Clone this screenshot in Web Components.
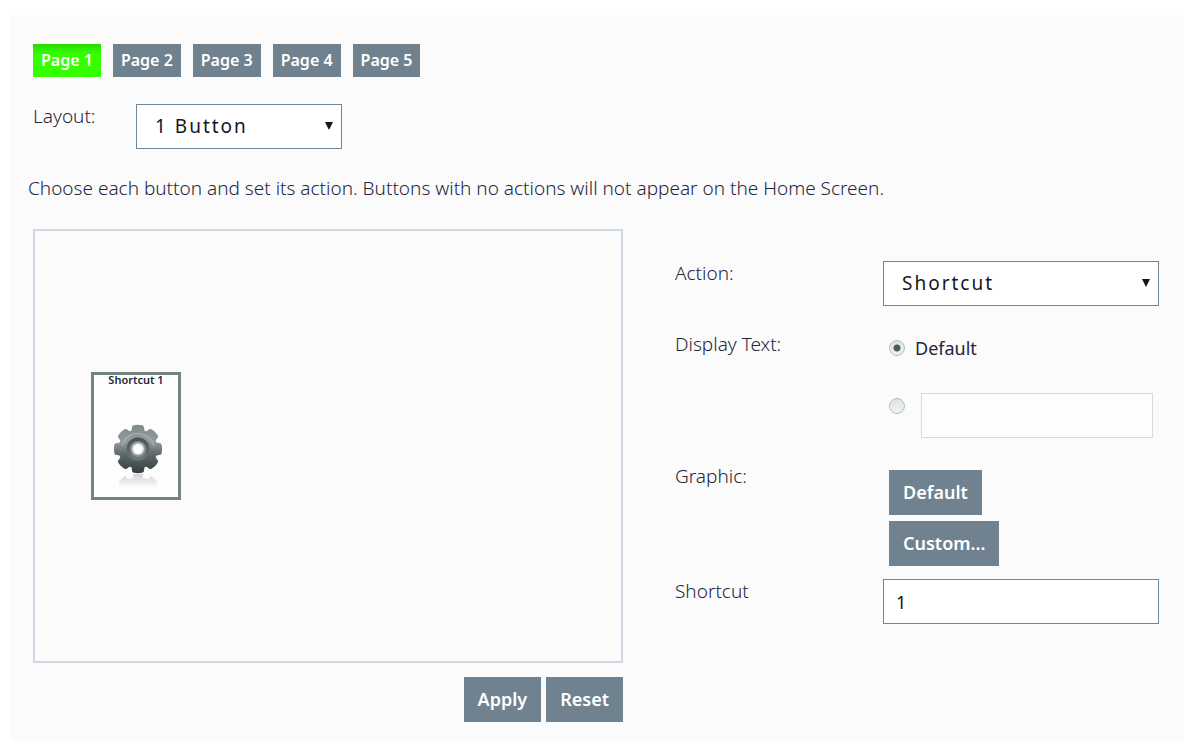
<!DOCTYPE html>
<html lang="en">
<head>
<meta charset="utf-8">
<title>Home Screen Layout</title>
<style>
  body {
    margin: 0;
    background: #fff;
    color: #24263c;
    font: 18px/24px "Noto Sans", "Open Sans", sans-serif;
  }
</style>
</head>
<body>
<home-screen-editor></home-screen-editor>

<script>
const base = `
  *, *::before, *::after { box-sizing: border-box; }
  [hidden] { display: none; }
`;

class BaseElement extends HTMLElement {
  connectedCallback() {
    if (this.shadowRoot) return;
    const root = this.attachShadow({ mode: 'open' });
    root.innerHTML = `<style>${base}${this.css()}</style>${this.html()}`;
  }
}

/* Solid slate button; size="small" is used for the page tabs. */
customElements.define('slate-button', class extends BaseElement {
  css() { return `
    :host { display: block; }
    button {
      display: block; margin: 0; height: 45px; padding: 0 14px 2px; border: 0; border-radius: 0;
      background: #70828f; color: #fff; font: 600 18px/24px "Noto Sans", sans-serif; cursor: pointer;
    }
    :host([size="small"]) button { height: 33px; padding: 0 8px 2px; font-size: 16px; }
    :host([active]) button { background: linear-gradient(#2bd900, #33ff00 10px); }
  `; }
  html() { return `<button type="button"><slot></slot></button>`; }
});

customElements.define('page-tabs', class extends BaseElement {
  css() { return `
    :host { display: block; }
    nav { display: flex; flex-wrap: wrap; gap: 12px; }
  `; }
  html() { return `<nav aria-label="Pages"><slot></slot></nav>`; }
});

const fieldCss = `
  :host { display: grid; grid-template-columns: var(--field-columns, minmax(0, 208fr) minmax(0, 276fr)); align-items: start; }
  .caption { color: #24263c; font-size: 19px; font-weight: 300; }
`;

customElements.define('select-field', class extends BaseElement {
  css() { return `${fieldCss}
    .box { display: grid; align-items: center; }
    .box > * { grid-area: 1 / 1; }
    select {
      appearance: none; width: 100%; height: 45px; margin: 0; padding: 0 30px 2px 18px;
      border: 1px solid #70879a; border-radius: 0; background: #fff; color: #14161f;
      font: 400 19px/24px "Noto Sans", sans-serif; letter-spacing: 2px;
    }
    svg { justify-self: end; margin: 0 9px 2px 0; pointer-events: none; display: block; }
  `; }
  html() { return `
    <label class="caption" for="choice">${this.getAttribute('label')}</label>
    <div class="box">
      <select id="choice"><option>${this.getAttribute('value')}</option></select>
      <svg width="8" height="8" viewBox="0 0 8 8" aria-hidden="true"><path d="M0 0h8L4 8z" fill="#101820"/></svg>
    </div>`; }
});

customElements.define('text-field', class extends BaseElement {
  css() { return `${fieldCss}
    input {
      width: 100%; height: 45px; margin: 0; padding: 0 12px; border: 1px solid #70879a;
      border-radius: 0; background: #fff; color: #14161f; font: 400 18px/24px "Noto Sans", sans-serif;
    }
  `; }
  html() { return `
    <label class="caption" for="entry">${this.getAttribute('label')}</label>
    <input id="entry" type="text" value="${this.getAttribute('value')}">`; }
});

customElements.define('display-text-field', class extends BaseElement {
  css() { return `${fieldCss}
    .options { display: grid; grid-template-columns: minmax(0, 1fr); gap: 33px; padding: 4px 6px 0; }
    .row { display: flex; align-items: center; gap: 10px; }
    .row.own { align-items: start; gap: 16px; }
    .own [type="radio"] { margin-top: 5px; }
    [type="radio"] {
      appearance: none; flex: none; width: 16px; height: 16px; margin: 0; border: 1px solid #b4bdbd;
      border-radius: 50%; background: linear-gradient(#dde3e3, #f0f3f3);
    }
    [type="radio"]:checked {
      background: radial-gradient(circle, #4c5c60 3px, #0000 4px), linear-gradient(#dde3e3, #f0f3f3);
    }
    [type="text"] {
      flex: 1; min-width: 0; height: 45px; margin: 0; padding: 0 12px; border: 1px solid #d5dbdd;
      border-radius: 0; background: #fdfdfd; font: inherit;
    }
  `; }
  html() { return `
    <span class="caption" id="caption">Display Text:</span>
    <div class="options" role="radiogroup" aria-labelledby="caption">
      <div class="row"><input type="radio" name="text" id="standard" checked><label for="standard">Default</label></div>
      <div class="row own"><input type="radio" name="text" id="own" aria-label="Custom text"><input type="text" aria-label="Custom display text"></div>
    </div>`; }
});

customElements.define('graphic-field', class extends BaseElement {
  css() { return `${fieldCss}
    .buttons { display: grid; gap: 6px; justify-items: start; padding: 6px 0 0 6px; }
  `; }
  html() { return `
    <span class="caption">Graphic:</span>
    <div class="buttons"><slate-button>Default</slate-button><slate-button>Custom...</slate-button></div>`; }
});

customElements.define('gear-icon', class extends BaseElement {
  css() { return `:host { display: block; } svg { display: block; }`; }
  html() {
    const tooth = a => `<path transform="rotate(${a} 24 25)" d="M14.500 9 17.500 6.500 18.200 2.600Q18.600 1.600 20 1.300 24 .4 28 1.300 29.400 1.600 29.800 2.600L30.500 6.500 33.500 9z"/>`;
    const gear = [0, 45, 90, 135, 180, 225, 270, 315].map(tooth).join('') + '<circle cx="24" cy="25" r="19.5"/>';
    return `
    <svg width="54" height="66" viewBox="-5 0 54 66" aria-hidden="true">
      <defs>
        <linearGradient id="body" gradientUnits="userSpaceOnUse" x1="0" y1="1" x2="0" y2="49">
          <stop offset="0" stop-color="#7f898c"/><stop offset=".35" stop-color="#939b9e"/>
          <stop offset=".6" stop-color="#5f6a6d"/><stop offset="1" stop-color="#343d40"/>
        </linearGradient>
        <linearGradient id="ring" x1="0" y1="0" x2="0" y2="1">
          <stop offset="0" stop-color="#465155"/><stop offset="1" stop-color="#6d797d"/>
        </linearGradient>
        <radialGradient id="hole"><stop offset=".6" stop-color="#fff"/><stop offset="1" stop-color="#d0d5d7"/></radialGradient>
        <linearGradient id="fade" gradientUnits="userSpaceOnUse" x1="0" y1="50" x2="0" y2="64">
          <stop offset="0" stop-color="#8d9698" stop-opacity=".4"/><stop offset="1" stop-color="#8d9698" stop-opacity="0"/>
        </linearGradient>
        <clipPath id="gear">${gear}</clipPath>
      </defs>
      <path fill="url(#fade)" d="M19 50h10v4l5 1 3-3 6 5v7H5v-7l6-5 3 3 5-1z"/>
      <g clip-path="url(#gear)"><rect width="50" height="50" fill="url(#body)"/></g>
      <path d="M8 22a16.500 16.500 0 0 1 32 0" fill="none" stroke="#c5cbcc" stroke-opacity=".35" stroke-width="2"/>
      <circle cx="24" cy="25" r="11.500" fill="url(#ring)"/>
      <circle cx="24" cy="25" r="8" fill="#8a9599"/>
      <circle cx="24" cy="25" r="6" fill="url(#hole)"/>
    </svg>`; }
});

customElements.define('shortcut-tile', class extends BaseElement {
  css() { return `
    :host { display: block; }
    button {
      display: flex; flex-direction: column; align-items: center; gap: 39px; width: 90px; height: 128px;
      margin: 0; padding: 0; border: 3px solid #748384; border-radius: 0; background: #fdfdfd;
      color: #24263c; font: 600 11px/10px "Noto Sans", sans-serif; cursor: pointer;
    }
  `; }
  html() { return `<button type="button"><slot></slot><gear-icon></gear-icon></button>`; }
});

customElements.define('home-screen-editor', class extends BaseElement {
  css() { return `
    :host { display: block; padding: 15px 16px 15px 11px; }
    main { padding: 29px 25px 19px 17px; background: #fbfbfb; }
    page-tabs, .layout, .columns { margin-left: 5px; }
    .layout { width: 309px; margin-top: 27px; --field-columns: 103px 1fr; }
    p { margin: 27px 0 29px; font-size: 19px; font-weight: 300; }
    .columns { display: grid; grid-template-columns: minmax(0, 590fr) minmax(0, 484fr); gap: 52px; }
    .canvas { height: 434px; padding: 141px 56px; border: 2px solid #ced8e5; }
    .actions { display: flex; justify-content: flex-end; gap: 5px; margin-top: 14px; }
    form { display: flex; flex-direction: column; gap: 26px; padding-top: 32px; }
    .group { display: flex; flex-direction: column; gap: 13px; }
  `; }
  html() { return `
    <main>
      <page-tabs>
        <slate-button size="small" active>Page 1</slate-button>
        <slate-button size="small">Page 2</slate-button>
        <slate-button size="small">Page 3</slate-button>
        <slate-button size="small">Page 4</slate-button>
        <slate-button size="small">Page 5</slate-button>
      </page-tabs>
      <select-field class="layout" label="Layout:" value="1 Button"></select-field>
      <p>Choose each button and set its action. Buttons with no actions will not appear on the Home Screen.</p>
      <div class="columns">
        <section>
          <div class="canvas"><shortcut-tile>Shortcut 1</shortcut-tile></div>
          <div class="actions"><slate-button>Apply</slate-button><slate-button>Reset</slate-button></div>
        </section>
        <form>
          <select-field label="Action:" value="Shortcut"></select-field>
          <display-text-field></display-text-field>
          <div class="group">
            <graphic-field></graphic-field>
            <text-field label="Shortcut" value="1"></text-field>
          </div>
        </form>
      </div>
    </main>`; }
});
</script>
</body>
</html>
